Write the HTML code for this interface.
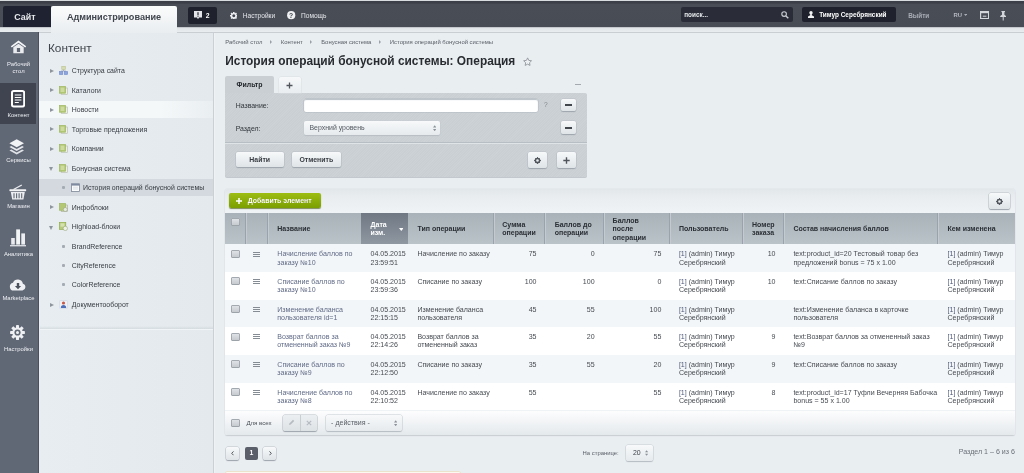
<!DOCTYPE html>
<html lang="ru">
<head>
<meta charset="utf-8">
<title>История операций бонусной системы</title>
<style>
*{box-sizing:border-box;margin:0;padding:0}
html,body{width:1024px;height:473px;overflow:hidden}
body{font-family:"Liberation Sans",sans-serif;font-size:6.93px;color:#3c4148;background:#e9eef1;position:relative}
#wrap{position:absolute;left:0;top:0;width:1024px;height:473px;overflow:hidden;filter:blur(.35px);will-change:transform}
.abs{position:absolute}
/* top bar */
#top{position:absolute;left:0;top:0;width:1024px;height:27.3px;background:linear-gradient(#3a3d45 0,#3d4048 3px,#494d56 4.5px,#484c55 100%)}
#topline{position:absolute;left:0;top:0;width:1024px;height:1.3px;background:#d9dcdf}
#topband{position:absolute;left:0;top:27.3px;width:1024px;height:5.7px;background:linear-gradient(#a9adb4 0,#e2e5e8 1px,#e9ecee 4.6px,#c9ced3 4.7px,#c9ced3 5.6px,#eef1f3 5.7px)}
#tab-site{position:absolute;left:3px;top:6px;width:48px;height:21.4px;background:#1f2331;color:#e6e8ec;font-weight:bold;font-size:8.9px;line-height:22px;text-align:left;padding-left:11.3px;border-radius:2px 0 0 0}
#tab-adm{position:absolute;left:51px;top:6px;width:126px;height:27px;background:linear-gradient(#fbfcfc,#e9edf0);color:#40454e;font-weight:bold;font-size:9.1px;line-height:23px;text-align:center;border-radius:2px 2px 0 0}
#badge{position:absolute;left:188px;top:6.7px;width:28.8px;height:17.2px;background:#1f222c;border-radius:2px;color:#fff;font-weight:bold;font-size:6.8px;line-height:17.2px}
.toptxt{position:absolute;top:10.7px;color:#e4e6ea;font-size:6.6px;line-height:9px;white-space:nowrap}
#search{position:absolute;left:680.6px;top:7.4px;width:112px;height:14.4px;background:#2a2d38;border-radius:2px;color:#e6e8eb;font-size:6.4px;font-weight:bold;line-height:15.6px;padding-left:3.6px}
#user{position:absolute;left:802.4px;top:7px;width:93.6px;height:15.4px;background:#1f222d;border-radius:2px;color:#fff;font-weight:bold;font-size:6.45px;line-height:15.4px;white-space:nowrap}
/* left icon bar */
#ibar{position:absolute;left:0;top:32px;width:39.2px;height:441px;background:#606775;border-right:1.2px solid #4b505b;z-index:2}
#ibar .act{position:absolute;left:0;top:51px;width:36px;height:40.7px;background:#3f4450}
.ilabel{position:absolute;left:0;width:37px;text-align:center;color:#eef0f3;font-size:5.9px;line-height:7px;white-space:nowrap}
/* menu panel */
#menu{position:absolute;left:38px;top:33px;width:175px;height:440px;background:linear-gradient(90deg,#e7edf0,#e3e9ed)}
#menu h2{position:absolute;left:10px;top:6px;font-size:11.8px;font-weight:normal;color:#3f444c;line-height:18px}
.mi{position:absolute;left:0;width:175px;height:19px;line-height:19px;font-size:6.95px;color:#363b42;white-space:nowrap}
.mi .arr{position:absolute;left:11.6px;top:7.4px;width:0;height:0;border-left:4px solid #8f959c;border-top:2.6px solid transparent;border-bottom:2.6px solid transparent}
.mi .arrd{position:absolute;left:11px;top:8.4px;width:0;height:0;border-top:4px solid #8f959c;border-left:2.5px solid transparent;border-right:2.5px solid transparent}
.mi .ico{position:absolute;left:21px;top:5px;width:9px;height:9px}
.mi .t{position:absolute;left:33.8px;top:0}
.mi .dot{position:absolute;left:24px;top:8px;width:3px;height:3px;background:#a5abb2;border-radius:1px}
#vsep{position:absolute;left:213px;top:33px;width:1px;height:440px;background:#cbd0d5;box-shadow:1px 0 0 #eff2f4}
/* content */
#bc{position:absolute;left:225.3px;top:38px;font-size:5.92px;line-height:9px;color:#5a6068;white-space:nowrap}
#bc i{display:inline-block;width:0;height:0;border-left:2.6px solid #9aa0a8;border-top:2px solid transparent;border-bottom:2px solid transparent;margin:0 8.8px 0 7.7px;vertical-align:0}
#title{position:absolute;left:225.3px;top:52.7px;font-size:11.88px;font-weight:bold;color:#282c31;line-height:16px;white-space:nowrap}

/* filter */
#ftab{position:absolute;left:225px;top:76px;width:49px;height:17px;background:#c9cfd3;border-radius:2px 2px 0 0;font-weight:bold;font-size:6.93px;line-height:17px;text-align:center;color:#1f2328}
#ftab2{position:absolute;left:279px;top:77px;width:21.5px;height:15.5px;background:linear-gradient(#f6f8f9,#e9edf0);border-radius:2px 2px 0 0;box-shadow:0 0 0 .5px #d9dee2}
#fbox{position:absolute;left:225px;top:92.5px;width:362px;height:84px;background:#c9cfd3 repeating-linear-gradient(135deg,rgba(255,255,255,.07) 0,rgba(255,255,255,.07) .8px,transparent .8px,transparent 1.8px);border-radius:0 2px 2px 2px;box-shadow:0 1px 0 #c2c8cd}
#fsep{position:absolute;left:225px;top:142px;width:362px;height:1px;background:#b7bec4;box-shadow:0 1px 0 #dfe4e7}
.flabel{position:absolute;left:235.7px;font-size:6.93px;line-height:9px;color:#30353b}
.inp{position:absolute;background:#fff;border-radius:2px;box-shadow:inset 0 1px 1px #b9c0c6,0 0 0 .5px #b4bbc1}
.sel{position:absolute;background:linear-gradient(#f7f9fa,#e6eaed);border-radius:2px;box-shadow:0 1px 1px #b7bec4,0 0 0 .5px #c6ccd1;font-size:6.93px;color:#555b63;white-space:nowrap}
.btn{position:absolute;background:linear-gradient(#f7f9fa,#dfe4e7);border-radius:2px;box-shadow:0 1px 1px #9fa6ad,0 0 0 .5px #b9c0c5;font-size:6.93px;color:#383d43;text-align:center;font-weight:bold;white-space:nowrap}
/* list */
#panel{position:absolute;left:225px;top:188.6px;width:790px;height:246px;background:linear-gradient(#e2e7ea 0,#e9edf0 8px,#f0f3f5 24px);border-radius:2px;box-shadow:0 1px 1px #c9ced2,0 0 0 .5px #e0e5e8}
#addbtn{position:absolute;left:229.4px;top:192.7px;width:91.6px;height:15.8px;border-radius:2px;background:linear-gradient(#9dbd12,#7b9f00);box-shadow:0 1px 1px #7f8b5a;color:#fff;font-weight:bold;font-size:6.95px;line-height:15.8px;white-space:nowrap;text-shadow:0 -0.5px 0 #5e7a00}
#thead{position:absolute;left:225px;top:213.2px;width:790px;height:31.3px;background:linear-gradient(#a8b2b8,#bac3c8)}
#thead .sep{position:absolute;top:0;width:1px;height:31.3px;background:#9aa3ab;box-shadow:1px 0 0 #c3cad0}
#thead .h{position:absolute;font-weight:bold;font-size:7px;line-height:8.2px;color:#2a2f35;white-space:nowrap}
#thead .sorted{position:absolute;left:136.3px;top:0;width:46.5px;height:31.3px;background:linear-gradient(#6f7883,#8f98a1)}
.row{position:absolute;left:225px;width:790px}
.row .c{position:absolute;top:6.1px;font-size:7.05px;line-height:8.2px;color:#464b51;white-space:nowrap}
.row .c.r{text-align:right}
.row .lnk{color:#616b87}
.row .g{color:#4f5a78}
.cb{position:absolute;width:8.7px;height:8px;border-radius:2px;background:linear-gradient(#e3e6e9,#c2c7cc);box-shadow:inset 0 0 0 .7px #8f969d}
.ham{position:absolute;left:28.3px;top:7.3px;width:7px;height:5px;border-top:1px solid #858c93;border-bottom:1px solid #858c93}
.ham:after{content:"";position:absolute;left:0;top:1px;width:7px;height:1px;background:#858c93}
#tfoot{position:absolute;left:225px;top:410.7px;width:790px;height:24px;background:linear-gradient(#fdfdfe,#e4e9ec);border-radius:0 0 2px 2px}
.pg{position:absolute;top:446.6px;height:13px;width:13.2px;border-radius:2px;font-size:6.9px;line-height:13px;text-align:center;font-weight:bold}
</style>
</head>
<body>
<div id="wrap">
<svg width="0" height="0" style="position:absolute">
<defs>
<g id="i-struct"><rect x="2.8" y="0.3" width="3.6" height="3.4" fill="#d6dcb2" stroke="#b3bb88" stroke-width=".5"/><path d="M4.5 3.8v1.2M2 6V5h5v1" stroke="#8f99a8" stroke-width=".6" fill="none"/><rect x="0.3" y="5.6" width="3.5" height="3" fill="#8ea4dc" stroke="#6a83c6" stroke-width=".5"/><rect x="5.2" y="5.6" width="3.5" height="3" fill="#8ea4dc" stroke="#6a83c6" stroke-width=".5"/></g>
<g id="i-ib"><rect x="2.2" y="2" width="6.3" height="6.6" fill="#eef0e8" stroke="#b3b8a8" stroke-width=".6"/><rect x="0.4" y="0.4" width="6.2" height="6.8" fill="#b3c774" stroke="#9ab45a" stroke-width=".6"/><rect x="1.6" y="1.6" width="3.8" height="4.4" fill="#cddaa0"/></g>
<g id="i-ib2"><rect x="2.2" y="2" width="6.3" height="6.6" fill="#e3e7d8" stroke="#a4aa96" stroke-width=".6"/><rect x="0.4" y="0.4" width="6.2" height="6.8" fill="#b3c774" stroke="#9ab45a" stroke-width=".6"/><circle cx="6.3" cy="6.5" r="2" fill="#e8ecdf" stroke="#8f9a78" stroke-width=".5"/></g>
<g id="i-hl"><rect x="0.4" y="0.4" width="6.4" height="7" fill="#b7cc78" stroke="#8aa640" stroke-width=".6"/><rect x="1.5" y="1.6" width="4" height="1" fill="#e9efd6"/><rect x="1.5" y="3.4" width="4" height="1" fill="#e9efd6"/><circle cx="6.3" cy="6.4" r="2.2" fill="#eef1e6" stroke="#8a9a6a" stroke-width=".5"/></g>
<g id="i-doc"><rect x="0.5" y="0.5" width="8" height="8" rx="1" fill="#eef1f6" stroke="#c9d0dc" stroke-width=".5"/><circle cx="4.5" cy="3" r="1.6" fill="#c85a4a"/><path d="M1.8 8c0-2.2 1.2-3 2.7-3s2.7.8 2.7 3z" fill="#4f6fb8"/></g>
<g id="i-tbl"><rect x="0.5" y="0.8" width="8" height="7.6" fill="#fbfcfd" stroke="#6f7a8c" stroke-width=".7"/><rect x="0.5" y="0.8" width="8" height="1.8" fill="#7f8aa0"/><path d="M2 4.2h5M2 6h5" stroke="#c7ccd4" stroke-width=".6"/></g>
</defs></svg>
<div id="top"></div>
<div id="topline"></div>
<div id="topband"></div>
<div id="tab-site">Сайт</div>
<div id="tab-adm">Администрирование</div>
<div id="badge"><svg class="abs" style="left:5.8px;top:4.8px" width="8" height="8.4" viewBox="0 0 8 8.4"><path d="M0 0h8v6.6H5L4 8.2 3 6.6H0z" fill="#e4e6ea"/><rect x="3.4" y="1.2" width="1.2" height="2.8" fill="#2a2d38"/><rect x="3.4" y="4.6" width="1.2" height="1.1" fill="#2a2d38"/></svg><span class="abs" style="left:17.8px;top:0">2</span></div>
<svg class="abs" style="left:229.8px;top:11.6px" width="7.6" height="7.6" viewBox="-3.8 -3.8 7.6 7.6"><g fill="#eceef1"><circle r="2.9"/><g id="gs"><rect x="-.8" y="-3.8" width="1.6" height="2" /></g><use href="#gs" transform="rotate(45)"/><use href="#gs" transform="rotate(90)"/><use href="#gs" transform="rotate(135)"/><use href="#gs" transform="rotate(180)"/><use href="#gs" transform="rotate(225)"/><use href="#gs" transform="rotate(270)"/><use href="#gs" transform="rotate(315)"/></g><circle r="1.5" fill="#41454f"/></svg>
<div class="toptxt" style="left:242.8px">Настройки</div>
<svg class="abs" style="left:287.4px;top:11.2px" width="8.4" height="8.4" viewBox="0 0 8.4 8.4"><circle cx="4.2" cy="4.2" r="4.1" fill="#eef0f2"/><text x="4.2" y="6.7" text-anchor="middle" font-family="Liberation Sans, sans-serif" font-weight="bold" font-size="6.8" fill="#3e424c">?</text></svg>
<div class="toptxt" style="left:301px">Помощь</div>
<div id="search">поиск...<svg class="abs" style="left:100px;top:3.8px" width="8" height="8" viewBox="0 0 8 8"><circle cx="3.1" cy="3.1" r="2.3" fill="none" stroke="#c9ccd2" stroke-width="1.1"/><path d="M4.9 4.9L7.3 7.3" stroke="#c9ccd2" stroke-width="1.4"/></svg></div>
<div id="user"><svg class="abs" style="left:5.8px;top:4px" width="6" height="7" viewBox="0 0 6 7"><circle cx="3" cy="1.8" r="1.7" fill="#f0f1f3"/><path d="M2.2 3h1.6v1.2L6 5.4V7H0V5.4l2.2-1.2z" fill="#f0f1f3"/></svg><span class="abs" style="left:16.8px;top:0">Тимур Серебрянский</span></div>
<div class="toptxt" style="left:908.2px;color:#a9adb5;font-weight:bold;font-size:6.4px">Выйти</div>
<div class="toptxt" style="left:953.5px;color:#b4b8bf;font-size:5.9px;font-weight:bold">RU</div>
<svg class="abs" style="left:964px;top:14.2px" width="3.2" height="2" viewBox="0 0 3.2 2"><path d="M0 0h3.2L1.6 2z" fill="#a9adb5"/></svg>
<svg class="abs" style="left:980px;top:11px" width="9.2" height="8.2" viewBox="0 0 9.2 8.2"><rect x=".6" y=".6" width="8" height="7" fill="none" stroke="#d3d6db" stroke-width="1.2"/><rect x=".6" y=".6" width="8" height="1.6" fill="#d3d6db"/><path d="M2.8 5.2h3.6" stroke="#d3d6db" stroke-width="1"/></svg>
<svg class="abs" style="left:1000px;top:11px" width="6.4" height="9.6" viewBox="0 0 6.4 9.6"><path d="M1.4 0h3.6v.9l-.6.4v2.4l1.8 1.4v.9H3.7v3.6H2.7V6H.2v-.9L2 3.7V1.3L1.4.9z" fill="#d3d6db"/></svg>

<div id="ibar">
  <div class="act"></div>
  <svg class="abs" style="left:9.5px;top:7.9px" width="17" height="14" viewBox="0 0 17 14"><path d="M8.5 .6L.8 6.2l1 1.2L8.5 2.7l6.7 4.7 1-1.2z" fill="#f4f5f7"/><path d="M3.3 7.3L8.5 3.8l5.2 3.5v6H3.3z" fill="#e9ebee"/><rect x="6.9" y="8" width="3.2" height="4" fill="#606775"/></svg>
  <div class="ilabel" style="top:29.2px">Рабочий</div>
  <div class="ilabel" style="top:35.9px">стол</div>
  <svg class="abs" style="left:10.8px;top:58.3px" width="14.2" height="17.6" viewBox="0 0 14.2 17.6"><rect x="1" y="1" width="12.2" height="15.6" rx="1.8" fill="#3f4450" stroke="#fff" stroke-width="2"/><path d="M3.8 5h6.6M3.8 7.5h6.6M3.8 10h6.6M3.8 12.5h4" stroke="#fff" stroke-width="1.2"/></svg>
  <div class="ilabel" style="top:79.5px">Контент</div>
  <svg class="abs" style="left:9.3px;top:106.6px" width="15.4" height="16" viewBox="0 0 15.4 16"><path d="M7.7 .3L15 4.3 7.7 8.3 .4 4.3z" fill="#f2f3f5"/><path d="M2.3 7L.4 8 7.7 12 15 8l-1.9-1-5.4 3z" fill="#e6e8ec"/><path d="M2.3 10.6L.4 11.6l7.3 4 7.3-4-1.9-1-5.4 3z" fill="#dfe2e6"/></svg>
  <div class="ilabel" style="top:125px">Сервисы</div>
  <svg class="abs" style="left:9.3px;top:151.5px" width="17.6" height="16" viewBox="0 0 17.6 16"><path d="M4.5 5.5L12.8 1" stroke="#eceef1" stroke-width="1.4" fill="none"/><rect x=".4" y="5.2" width="16.8" height="2" rx=".6" fill="#f2f3f5"/><path d="M1.8 8h14l-1.4 7.6H3.2z" fill="#eceef1"/><path d="M5 9.3v5M7.6 9.3v5M10.1 9.3v5M12.7 9.3v5" stroke="#606775" stroke-width="1.1"/></svg>
  <div class="ilabel" style="top:171px">Магазин</div>
  <svg class="abs" style="left:9.7px;top:197.1px" width="16.2" height="17.6" viewBox="0 0 16.2 17.6"><rect x="1.2" y="9" width="3.6" height="6.6" fill="#e8eaed"/><rect x="6.2" y=".4" width="3.8" height="15.2" fill="#f4f5f7"/><rect x="11.3" y="4.4" width="3.7" height="11.2" fill="#eceef1"/><rect x="0" y="16" width="16.2" height="1.4" fill="#d9dce1"/></svg>
  <div class="ilabel" style="top:218.5px">Аналитика</div>
  <svg class="abs" style="left:9px;top:246.0px" width="18" height="13" viewBox="0 0 18 13"><path d="M4.6 12.6a4 4 0 0 1-.6-7.9 5.2 5.2 0 0 1 9.9 1.1 3.5 3.5 0 0 1-.4 6.8z" fill="#eef0f3"/><path d="M7.8 5h2.4v3h1.9L9 11.2 5.9 8h1.9z" fill="#4b515d"/></svg>
  <div class="ilabel" style="top:263.2px">Marketplace</div>
  <svg class="abs" style="left:10px;top:293.2px" width="15" height="15" viewBox="-7.5 -7.5 15 15"><g fill="#eef0f3"><circle r="5.2"/><g id="gt"><rect x="-1.5" y="-7.4" width="3" height="3.4" rx=".4"/></g><use href="#gt" transform="rotate(45)"/><use href="#gt" transform="rotate(90)"/><use href="#gt" transform="rotate(135)"/><use href="#gt" transform="rotate(180)"/><use href="#gt" transform="rotate(225)"/><use href="#gt" transform="rotate(270)"/><use href="#gt" transform="rotate(315)"/></g><circle r="3.1" fill="#606775"/><circle r="1.5" fill="#eef0f3"/></svg>
  <div class="ilabel" style="top:313.9px">Настройки</div>
</div>

<div id="menu">
  <h2>Контент</h2>
  <div class="abs" style="left:0;top:68.2px;width:175px;height:17px;background:linear-gradient(90deg,#f5f8f9 0%,#f5f8f9 70%,#e9eef1 100%)"></div>
  <div class="abs" style="left:0;top:145.9px;width:175px;height:17.5px;background:#d3d9de"></div>
  <div class="mi" style="top:28.2px"><b class="arr"></b><svg class="ico" viewBox="0 0 9 9"><use href="#i-struct"/></svg><span class="t">Структура сайта</span></div>
  <div class="mi" style="top:47.7px"><b class="arr"></b><svg class="ico" viewBox="0 0 9 9"><use href="#i-ib"/></svg><span class="t">Каталоги</span></div>
  <div class="mi" style="top:67.2px"><b class="arr"></b><svg class="ico" viewBox="0 0 9 9"><use href="#i-ib"/></svg><span class="t">Новости</span></div>
  <div class="mi" style="top:86.7px"><b class="arr"></b><svg class="ico" viewBox="0 0 9 9"><use href="#i-ib"/></svg><span class="t">Торговые предложения</span></div>
  <div class="mi" style="top:106.2px"><b class="arr"></b><svg class="ico" viewBox="0 0 9 9"><use href="#i-ib"/></svg><span class="t">Компании</span></div>
  <div class="mi" style="top:125.7px"><b class="arrd"></b><svg class="ico" viewBox="0 0 9 9"><use href="#i-ib"/></svg><span class="t">Бонусная система</span></div>
  <div class="mi" style="top:164.7px"><b class="arr"></b><svg class="ico" viewBox="0 0 9 9"><use href="#i-ib2"/></svg><span class="t">Инфоблоки</span></div>
  <div class="mi" style="top:184.2px"><b class="arrd"></b><svg class="ico" viewBox="0 0 9 9"><use href="#i-hl"/></svg><span class="t">Highload-блоки</span></div>
  <div class="mi" style="top:262.2px"><b class="arr"></b><svg class="ico" viewBox="0 0 9 9"><use href="#i-doc"/></svg><span class="t">Документооборот</span></div>
  <div class="mi" style="top:145.2px"><b class="dot"></b><svg class="ico" style="left:33px" viewBox="0 0 9 9"><use href="#i-tbl"/></svg><span class="t" style="left:45px">История операций бонусной системы</span></div>
  <div class="mi" style="top:203.7px"><b class="dot"></b><span class="t">BrandReference</span></div>
  <div class="mi" style="top:223.2px"><b class="dot"></b><span class="t">CityReference</span></div>
  <div class="mi" style="top:242.4px"><b class="dot"></b><span class="t">ColorReference</span></div>
</div>
<div id="vsep"></div>
<div class="abs" style="left:40px;top:326px;width:173px;height:2.5px;background:linear-gradient(rgba(200,207,212,0),rgba(200,207,212,.55))"></div><div class="abs" style="left:40px;top:328.5px;width:173px;height:1px;background:#f1f4f6"></div>

<div id="bc">Рабочий стол<i></i>Контент<i></i>Бонусная система<i></i>История операций бонусной системы</div>
<div id="title">История операций бонусной системы: Операция</div>
<svg class="abs" style="left:522.6px;top:57px" width="9.2" height="9" viewBox="0 0 20 19"><path d="M10 1.6l2.6 5.5 6 .8-4.4 4.2 1.1 6L10 15.200l-5.300 2.900 1.100-6L1.400 7.900l6-.8z" fill="#eef1f3" stroke="#8d939a" stroke-width="1.9" stroke-linejoin="round"/></svg>


<!-- filter -->
<div id="fbox"></div>
<div id="ftab">Фильтр</div>
<div id="ftab2"><svg class="abs" style="left:7px;top:4.5px" width="7" height="7" viewBox="0 0 7 7"><path d="M3.5 .5v6M.5 3.5h6" stroke="#50555c" stroke-width="1.3"/></svg></div>
<div class="abs" style="left:575px;top:83.8px;width:6px;height:1.3px;background:#a3a9af"></div>
<div id="fsep"></div>
<div class="flabel" style="top:100.9px">Название:</div>
<div class="flabel" style="top:124px">Раздел:</div>
<div class="inp" style="left:304px;top:98.6px;width:233.5px;height:13.8px"></div>
<div class="abs" style="left:544px;top:100px;font-size:6.6px;line-height:9px;color:#7e848b">?</div>
<div class="sel" style="left:304px;top:120.5px;width:136px;height:14px;line-height:14px;padding-left:5.5px">Верхний уровень<svg class="abs" style="right:4px;top:4px" width="3.4" height="6.5" viewBox="0 0 4 7"><path d="M2 0l2 2.6H0zM2 7L0 4.4h4z" fill="#8b9299"/></svg></div>
<div class="btn" style="left:560.7px;top:99px;width:15.6px;height:12.4px"><i class="abs" style="left:4.6px;top:5.3px;width:6.4px;height:1.9px;background:#42474d"></i></div>
<div class="btn" style="left:560.7px;top:121.2px;width:15.6px;height:12.8px"><i class="abs" style="left:4.6px;top:5.5px;width:6.4px;height:1.9px;background:#42474d"></i></div>
<div class="btn" style="left:235.7px;top:152px;width:48.1px;height:15.2px;line-height:15.2px">Найти</div>
<div class="btn" style="left:292px;top:152px;width:48.6px;height:15.2px;line-height:15.2px">Отменить</div>
<div class="btn" style="left:527.5px;top:152px;width:19.2px;height:16px"><svg class="abs" style="left:6.1px;top:4.5px" width="7" height="7" viewBox="0 0 7 7"><circle cx="3.5" cy="3.5" r="2.1" fill="none" stroke="#50555c" stroke-width="1.5"/><path d="M3.5 0v7M0 3.5h7M1 1l5 5M6 1L1 6" stroke="#50555c" stroke-width=".9" stroke-dasharray="1 5"/></svg></div>
<div class="btn" style="left:556.7px;top:152px;width:19.3px;height:16px"><svg class="abs" style="left:6.1px;top:4.5px" width="7" height="7" viewBox="0 0 7 7"><path d="M3.5 .3v6.4M.3 3.5h6.4" stroke="#50555c" stroke-width="1.4"/></svg></div>

<!-- list -->
<div id="panel"></div>
<div id="addbtn"><svg class="abs" style="left:6.3px;top:5px" width="6" height="6" viewBox="0 0 6 6"><path d="M3 0v6M0 3h6" stroke="#fff" stroke-width="1.5"/></svg><span class="abs" style="left:18.4px;top:0">Добавить элемент</span></div>
<div class="btn" style="left:989.3px;top:193.2px;width:21px;height:15.8px"><svg class="abs" style="left:7.2px;top:4.6px" width="7" height="7" viewBox="0 0 7 7"><circle cx="3.5" cy="3.5" r="2.1" fill="none" stroke="#50555c" stroke-width="1.5"/><path d="M3.5 0v7M0 3.5h7M1 1l5 5M6 1L1 6" stroke="#50555c" stroke-width=".9" stroke-dasharray="1 5"/></svg></div>
<div id="thead">
  <div class="sorted"></div>
  <b class="cb" style="left:6px;top:5.2px"></b>
  <i class="sep" style="left:20.4px"></i><i class="sep" style="left:42.4px"></i>
  <i class="sep" style="left:267.9px"></i><i class="sep" style="left:319.1px"></i><i class="sep" style="left:377.8px"></i>
  <i class="sep" style="left:443.7px"></i><i class="sep" style="left:516.5px"></i><i class="sep" style="left:558.2px"></i><i class="sep" style="left:712.4px"></i>
  <span class="h" style="left:52.3px;top:11.8px">Название</span>
  <span class="h" style="left:145.5px;top:8.1px;color:#fff">Дата<br>изм.</span>
  <svg class="abs" style="left:173.5px;top:14.5px" width="4.6" height="3" viewBox="0 0 5 3"><path d="M0 0h5L2.5 3z" fill="#fff"/></svg>
  <span class="h" style="left:192.4px;top:11.8px">Тип операции</span>
  <span class="h" style="left:277.3px;top:7.9px">Сумма<br>операции</span>
  <span class="h" style="left:329.7px;top:7.9px">Баллов до<br>операции</span>
  <span class="h" style="left:387.6px;top:4.0px">Баллов<br>после<br>операции</span>
  <span class="h" style="left:453.9px;top:11.8px">Пользователь</span>
  <span class="h" style="left:527px;top:7.9px">Номер<br>заказа</span>
  <span class="h" style="left:568.4px;top:11.8px">Состав начисления баллов</span>
  <span class="h" style="left:722.5px;top:11.8px">Кем изменена</span>
</div>
<div class="row" style="top:244.3px;height:27.7px;background:#f3f6f8">
<b class="cb" style="left:6px;top:5.4px"></b><b class="ham"></b>
<span class="c lnk" style="left:52.3px">Начисление баллов по<br>заказу №10</span>
<span class="c" style="left:145.5px">04.05.2015<br>23:59:51</span>
<span class="c" style="left:192.4px">Начисление по заказу</span>
<span class="c r" style="right:478.5px">75</span>
<span class="c r" style="right:420.4px">0</span>
<span class="c r" style="right:353.7px">75</span>
<span class="c" style="left:453.9px"><span class="g">[1]</span> (admin) Тимур<br>Серебрянский</span>
<span class="c r" style="right:239.5px">10</span>
<span class="c" style="left:568.4px">text:product_id=20 Тестовый товар без<br>предложений bonus = 75 x 1.00</span>
<span class="c" style="left:722.5px"><span class="g">[1]</span> (admin) Тимур<br>Серебрянский</span>
</div>
<div class="row" style="top:271.9px;height:27.7px;background:#ffffff">
<b class="cb" style="left:6px;top:5.4px"></b><b class="ham"></b>
<span class="c lnk" style="left:52.3px">Списание баллов по<br>заказу №10</span>
<span class="c" style="left:145.5px">04.05.2015<br>23:59:36</span>
<span class="c" style="left:192.4px">Списание по заказу</span>
<span class="c r" style="right:478.5px">100</span>
<span class="c r" style="right:420.4px">100</span>
<span class="c r" style="right:353.7px">0</span>
<span class="c" style="left:453.9px"><span class="g">[1]</span> (admin) Тимур<br>Серебрянский</span>
<span class="c r" style="right:239.5px">10</span>
<span class="c" style="left:568.4px">text:Списание баллов по заказу</span>
<span class="c" style="left:722.5px"><span class="g">[1]</span> (admin) Тимур<br>Серебрянский</span>
</div>
<div class="row" style="top:299.6px;height:27.7px;background:#f3f6f8">
<b class="cb" style="left:6px;top:5.4px"></b><b class="ham"></b>
<span class="c lnk" style="left:52.3px">Изменение баланса<br>пользователя id=1</span>
<span class="c" style="left:145.5px">04.05.2015<br>22:15:15</span>
<span class="c" style="left:192.4px">Изменение баланса<br>пользователя</span>
<span class="c r" style="right:478.5px">45</span>
<span class="c r" style="right:420.4px">55</span>
<span class="c r" style="right:353.7px">100</span>
<span class="c" style="left:453.9px"><span class="g">[1]</span> (admin) Тимур<br>Серебрянский</span>
<span class="c r" style="right:239.5px"></span>
<span class="c" style="left:568.4px">text:Изменение баланса в карточке<br>пользователя</span>
<span class="c" style="left:722.5px"><span class="g">[1]</span> (admin) Тимур<br>Серебрянский</span>
</div>
<div class="row" style="top:327.2px;height:27.7px;background:#ffffff">
<b class="cb" style="left:6px;top:5.4px"></b><b class="ham"></b>
<span class="c lnk" style="left:52.3px">Возврат баллов за<br>отмененный заказ №9</span>
<span class="c" style="left:145.5px">04.05.2015<br>22:14:26</span>
<span class="c" style="left:192.4px">Возврат баллов за<br>отмененный заказ</span>
<span class="c r" style="right:478.5px">35</span>
<span class="c r" style="right:420.4px">20</span>
<span class="c r" style="right:353.7px">55</span>
<span class="c" style="left:453.9px"><span class="g">[1]</span> (admin) Тимур<br>Серебрянский</span>
<span class="c r" style="right:239.5px">9</span>
<span class="c" style="left:568.4px">text:Возврат баллов за отмененный заказ<br>№9</span>
<span class="c" style="left:722.5px"><span class="g">[1]</span> (admin) Тимур<br>Серебрянский</span>
</div>
<div class="row" style="top:354.9px;height:27.7px;background:#f3f6f8">
<b class="cb" style="left:6px;top:5.4px"></b><b class="ham"></b>
<span class="c lnk" style="left:52.3px">Списание баллов по<br>заказу №9</span>
<span class="c" style="left:145.5px">04.05.2015<br>22:12:50</span>
<span class="c" style="left:192.4px">Списание по заказу</span>
<span class="c r" style="right:478.5px">35</span>
<span class="c r" style="right:420.4px">55</span>
<span class="c r" style="right:353.7px">20</span>
<span class="c" style="left:453.9px"><span class="g">[1]</span> (admin) Тимур<br>Серебрянский</span>
<span class="c r" style="right:239.5px">9</span>
<span class="c" style="left:568.4px">text:Списание баллов по заказу</span>
<span class="c" style="left:722.5px"><span class="g">[1]</span> (admin) Тимур<br>Серебрянский</span>
</div>
<div class="row" style="top:382.6px;height:27.7px;background:#ffffff">
<b class="cb" style="left:6px;top:5.4px"></b><b class="ham"></b>
<span class="c lnk" style="left:52.3px">Начисление баллов по<br>заказу №8</span>
<span class="c" style="left:145.5px">04.05.2015<br>22:10:52</span>
<span class="c" style="left:192.4px">Начисление по заказу</span>
<span class="c r" style="right:478.5px">55</span>
<span class="c r" style="right:420.4px"></span>
<span class="c r" style="right:353.7px">55</span>
<span class="c" style="left:453.9px"><span class="g">[1]</span> (admin) Тимур<br>Серебрянский</span>
<span class="c r" style="right:239.5px">8</span>
<span class="c" style="left:568.4px">text:product_id=17 Туфли Вечерняя Бабочка<br>bonus = 55 x 1.00</span>
<span class="c" style="left:722.5px"><span class="g">[1]</span> (admin) Тимур<br>Серебрянский</span>
</div>
<div id="tfoot">
  <b class="cb" style="left:6.4px;top:8.4px"></b>
  <span class="abs" style="left:21.4px;top:8.3px;font-size:6.1px;line-height:8px;color:#4a5058;white-space:nowrap">Для всех</span>
  <div class="btn" style="left:57.5px;top:4px;width:34.8px;height:16.2px;background:linear-gradient(#eceff1,#dde2e5)"><i class="abs" style="left:17.2px;top:0;width:1px;height:16.2px;background:#c9ced3"></i>
    <svg class="abs" style="left:5.4px;top:4.6px" width="7" height="7" viewBox="0 0 7 7"><path d="M1 6l.6-1.8L5 .8 6.2 2 2.8 5.4z" fill="#b5bbc1"/></svg>
    <svg class="abs" style="left:23px;top:5.2px" width="6" height="6" viewBox="0 0 6 6"><path d="M.8.8l4.4 4.4M5.2.8L.8 5.2" stroke="#b5bbc1" stroke-width="1.2"/></svg>
  </div>
  <div class="sel" style="left:100.5px;top:4.5px;width:76.5px;height:15.7px;line-height:15.7px;padding-left:5.6px;font-size:7.05px;color:#5c626a">- действия -<svg class="abs" style="right:5px;top:4.8px" width="3.4" height="6.5" viewBox="0 0 4 7"><path d="M2 0l2 2.6H0zM2 7L0 4.4h4z" fill="#8b9299"/></svg></div>
</div>

<!-- pagination -->
<div class="pg btn" style="left:226px"><svg class="abs" style="left:5.3px;top:4.4px" width="3" height="4.6" viewBox="0 0 3 4.6"><path d="M2.5 .4L.7 2.300l1.800 1.900" stroke="#50555c" stroke-width="1" fill="none"/></svg></div>
<div class="pg" style="left:245px;top:447.2px;width:12.7px;height:12.4px;line-height:12.4px;background:#5a5f69;color:#fff">1</div>
<div class="pg btn" style="left:263px"><svg class="abs" style="left:5.6px;top:4.4px" width="3" height="4.6" viewBox="0 0 3 4.6"><path d="M.5 .4L2.300 2.300.5 4.200" stroke="#50555c" stroke-width="1" fill="none"/></svg></div>
<div class="abs" style="left:582.6px;top:449.2px;font-size:5.9px;line-height:8px;color:#5a6068;white-space:nowrap">На странице:</div>
<div class="sel" style="left:626px;top:445.3px;width:27px;height:16px;line-height:16px;padding-left:7px;color:#3c4148">20<svg class="abs" style="right:4.5px;top:5px" width="3.2" height="6" viewBox="0 0 4 7"><path d="M2 0l2 2.6H0zM2 7L0 4.4h4z" fill="#8b9299"/></svg></div>
<div class="abs" style="left:958.7px;top:448.2px;font-size:7.1px;line-height:9px;color:#6a7078;white-space:nowrap">Раздел 1 – 6 из 6</div>
<div class="abs" style="left:225px;top:470.5px;width:236px;height:6px;background:#fbf9f1;border:1px solid #ece3cc;border-radius:2px"></div>
</div>
</body>
</html>
